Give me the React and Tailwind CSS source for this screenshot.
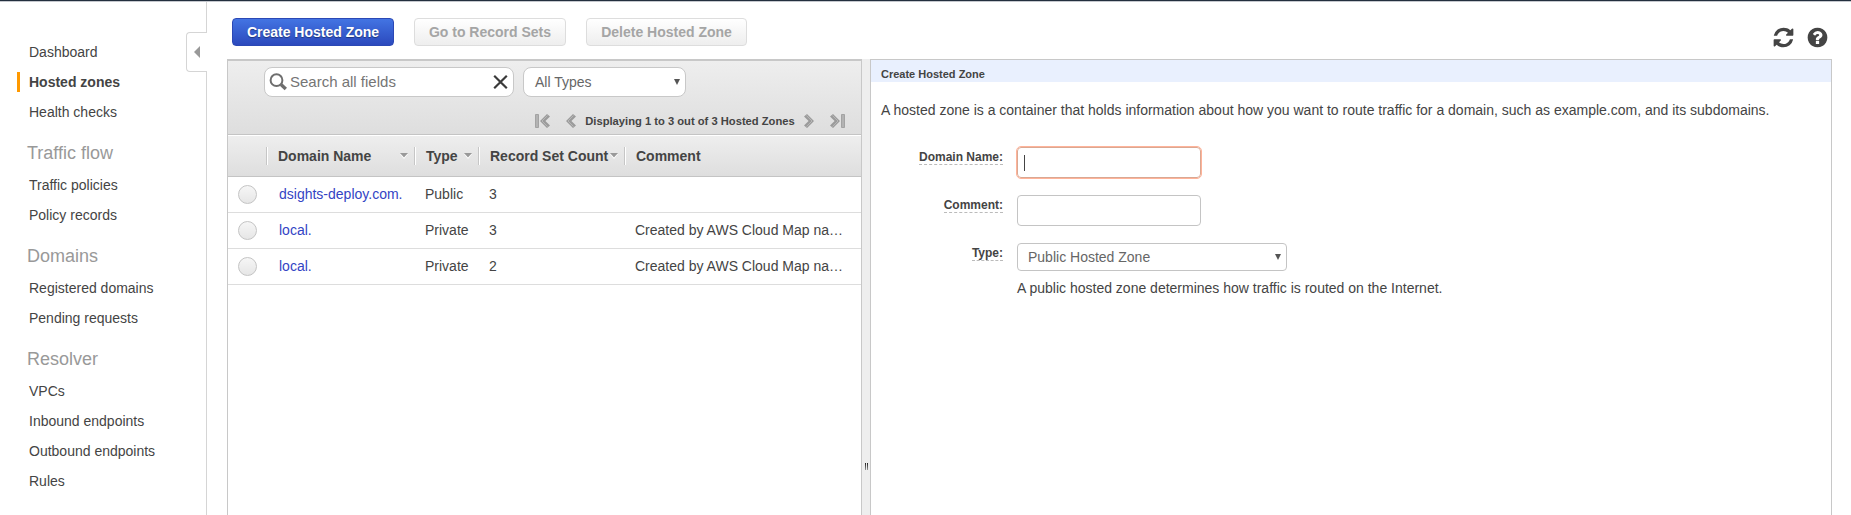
const NAV = [
  { items: ['Dashboard', 'Hosted zones', 'Health checks'] },
  { title: 'Traffic flow', items: ['Traffic policies', 'Policy records'] },
  { title: 'Domains', items: ['Registered domains', 'Pending requests'] },
  { title: 'Resolver', items: ['VPCs', 'Inbound endpoints', 'Outbound endpoints', 'Rules'] },
];

const ZONES = [
  { name: 'dsights-deploy.com.', type: 'Public', count: 3, comment: '' },
  { name: 'local.', type: 'Private', count: 3, comment: 'Created by AWS Cloud Map na…' },
  { name: 'local.', type: 'Private', count: 2, comment: 'Created by AWS Cloud Map na…' },
];

function Sidebar() {
  return (
    <nav className="relative w-[207px] shrink-0 border-r border-[#d5d5d5] pt-[35px]">
      {NAV.map((group, i) => (
        <div key={i}>
          {group.title && (
            <h2 className="h-[43px] pl-[27px] pt-[5px] text-[18px] leading-[43px] text-[#999]">{group.title}</h2>
          )}
          <ul>
            {group.items.map((item) => {
              const active = item === 'Hosted zones';
              return (
                <li key={item} className="flex h-[30px] items-center pl-[17px] text-[14px] leading-[30px]">
                  <span className={active ? 'h-5 w-[3px] bg-[#ff9900]' : 'h-5 w-[3px]'} />
                  <a className={active ? 'pl-[9px] font-bold' : 'pl-[9px]'}>{item}</a>
                </li>
              );
            })}
          </ul>
        </div>
      ))}
      <button className="absolute -right-px top-[30px] flex h-10 w-[21px] items-center rounded-l-[4px] border border-r-0 border-[#d5d5d5] bg-white pl-[7px]">
        <svg width="6" height="12" viewBox="0 0 6 12" fill="#999">
          <path d="M6 0v12L0 6z" />
        </svg>
      </button>
    </nav>
  );
}

function RefreshIcon() {
  return (
    <svg width="23" height="23" viewBox="0 0 1792 1792" fill="#444">
      <path d="M1639 1056q0 5-1 7-64 268-268 434.5t-478 166.5q-146 0-282.5-55t-243.5-157l-129 129q-19 19-45 19t-45-19-19-45v-448q0-26 19-45t45-19h448q26 0 45 19t19 45-19 45l-137 137q71 66 161 102t187 36q134 0 250-65t186-179q11-17 53-117 8-23 30-23h192q13 0 22.5 9.5t9.500 22.500zm25-800v448q0 26-19 45t-45 19h-448q-26 0-45-19t-19-45 19-45l138-138q-148-137-349-137-134 0-250 65t-186 179q-11 17-53 117-8 23-30 23h-199q-13 0-22.500-9.500t-9.500-22.500v-7q65-268 270-434.500t480-166.500q146 0 284 55.500t245 156.500l130-129q19-19 45-19t45 19 19 45z" />
    </svg>
  );
}

function HelpIcon() {
  return (
    <svg width="23" height="23" viewBox="0 0 1792 1792" fill="#444">
      <path d="M1024 1376v-192q0-14-9-23t-23-9h-192q-14 0-23 9t-9 23v192q0 14 9 23t23 9h192q14 0 23-9t9-23zm256-672q0-88-55.5-163t-138.5-116-170-41q-243 0-371 213-15 24 8 42l132 100q7 6 19 6 16 0 25-12 53-68 86-92 34-24 86-24 48 0 85.5 26t37.5 59q0 38-20 61t-68 45q-63 28-115.5 86.5t-52.5 125.5v36q0 14 9 23t23 9h192q14 0 23-9t9-23q0-19 21.5-49.5t54.5-49.5q32-18 49-28.5t46-35 44.5-48 28-60.5 12.5-81zm384 192q0 209-103 385.5t-279.5 279.5-385.5 103-385.5-103-279.5-279.5-103-385.5 103-385.5 279.5-279.5 385.5-103 385.5 103 279.5 279.5 103 385.5z" />
    </svg>
  );
}

function Toolbar() {
  const disabled =
    'h-7 rounded-[4px] border border-[#ddd] bg-linear-to-b from-white to-[#eee] text-center text-[14px] leading-[26px] font-bold text-[#a5a5a5]';
  return (
    <div className="flex h-[57px] items-start pl-[5px] pt-4">
      <button className="h-7 w-[162px] rounded-[4px] border border-[#2b48b5] bg-linear-to-b from-[#4374e3] to-[#2c49bd] text-center text-[14px] leading-[26px] font-bold text-white [text-shadow:0_1px_1px_#0006]">
        Create Hosted Zone
      </button>
      <button className={`${disabled} ml-5 w-[152px]`}>Go to Record Sets</button>
      <button className={`${disabled} ml-5 w-[161px]`}>Delete Hosted Zone</button>
      <div className="ml-auto mr-[22px] flex gap-[11px] pt-[8px]">
        <RefreshIcon />
        <HelpIcon />
      </div>
    </div>
  );
}

function SelectArrow() {
  return (
    <svg width="6" height="6" viewBox="0 0 6 6" fill="#555">
      <path d="M0 0h6L3 6z" />
    </svg>
  );
}

function Chevron({ bar, flip }) {
  const width = bar ? 15 : 10;
  return (
    <svg width={width} height="14" viewBox={`0 0 ${width} 14`} className={flip ? '-scale-x-100' : ''}>
      {bar && <path d="M0.5 0.5h3v13h-3z" fill="#b3b3b3" stroke="#a3a3a3" />}
      <g transform={bar ? 'translate(5 0)' : ''}>
        <path d="M7 0 0 7l7 7 3-2.600L5.400 7 10 2.600z" fill="#9b9b9b" />
        <path d="M7.600 1.500 2 7l5.600 5.500" fill="none" stroke="#b8b8b8" strokeWidth="1" />
      </g>
    </svg>
  );
}

function FilterBar() {
  return (
    <div className="h-[74px] border-b border-[#c4c4c4] bg-linear-to-b from-[#eee] to-[#dedede] pt-[6px]">
      <div className="flex gap-[9px] pl-9">
        <div className="flex h-[30px] w-[250px] items-center rounded-[8px] border border-[#c8c8c8] bg-white pl-[4px] pr-[5px]">
          <svg width="19" height="18" viewBox="0 0 19 18" fill="none" stroke="#6e6e6e">
            <circle cx="7.500" cy="7.200" r="5.900" strokeWidth="2" />
            <path d="M12 11.500 16.800 16" strokeWidth="3.400" />
          </svg>
          <span className="pl-[2px] text-[15px] leading-[28px] text-[#757575]">Search all fields</span>
          <svg className="ml-auto" width="15" height="14" viewBox="0 0 15 14" stroke="#3a3a3a" strokeWidth="2.200">
            <path d="M1.200 0.800 13.800 13.200M13.800 0.800 1.200 13.200" />
          </svg>
        </div>
        <div className="flex h-[30px] w-[163px] items-center justify-between rounded-[8px] border border-[#c8c8c8] bg-white pl-[11px] pr-[5px] text-[14px] leading-[28px] text-[#666]">
          All Types
          <SelectArrow />
        </div>
      </div>
      <div className="mt-[17px] flex h-[14px] pl-[307px]">
        <Chevron bar />
        <span className="w-4" />
        <Chevron />
        <span className="w-[228px] text-center text-[11.200px] leading-[14px] font-bold">
          Displaying 1 to 3 out of 3 Hosted Zones
        </span>
        <Chevron flip />
        <span className="w-4" />
        <Chevron bar flip />
      </div>
    </div>
  );
}

function HeaderCell({ className, label, sort }) {
  return (
    <div className={`flex items-center ${className}`}>
      <span className="h-[18px] w-px bg-[#c6c6c6]" />
      <span className="h-[18px] w-px bg-white" />
      <span className="pl-[10px] whitespace-nowrap">{label}</span>
      {sort && (
        <svg className="ml-auto mr-[6px]" width="8" height="6" viewBox="0 0 8 6">
          <path d="M0 1h8L4 6z" fill="#fff" />
          <path d="M0 0h8L4 4.500z" fill="#999" />
        </svg>
      )}
    </div>
  );
}

function ZoneTable() {
  return (
    <div>
      <div className="flex h-[42px] border-t border-b border-t-white border-b-[#c4c4c4] bg-linear-to-b from-[#eee] to-[#dedede] pl-[38px] text-[14px] font-bold">
        <HeaderCell className="w-[148px]" label="Domain Name" sort />
        <HeaderCell className="w-[64px]" label="Type" sort />
        <HeaderCell className="w-[146px]" label="Record Set Count" sort />
        <HeaderCell className="w-[230px]" label="Comment" />
        <HeaderCell className="w-[2px] overflow-hidden" label="" />
      </div>
      {ZONES.map((z, i) => (
        <div key={i} className="flex h-9 items-center border-b border-[#ddd] pl-[10px] text-[14px] leading-[35px]">
          <span className="h-[19px] w-[19px] rounded-full border border-[#c4c4c4] bg-linear-to-b from-[#f6f6f6] to-[#e6e6e6]" />
          <a className="ml-[22px] w-[146px] text-[#3344c4]">{z.name}</a>
          <span className="w-16">{z.type}</span>
          <span className="w-[146px]">{z.count}</span>
          <span className="whitespace-nowrap">{z.comment}</span>
        </div>
      ))}
    </div>
  );
}

function FieldLabel({ children }) {
  return (
    <div className="flex w-[122px] shrink-0 justify-end">
      <span className="h-[18px] border-b border-dashed border-[#bbb] text-[12px] leading-[20px] font-bold">{children}</span>
    </div>
  );
}

function CreatePanel() {
  return (
    <section className="w-[962px] border border-b-0 border-[#c8c8c8] bg-white">
      <h3 className="h-[22px] bg-[#e9f0fe] pl-[10px] text-[11px] leading-[28px] font-bold">Create Hosted Zone</h3>
      <p className="mt-[16px] pl-[10px] text-[14px] leading-6">
        A hosted zone is a container that holds information about how you want to route traffic for a domain, such as
        example.com, and its subdomains.
      </p>
      <div className="mt-[25px] flex h-12 pl-[10px]">
        <FieldLabel>Domain Name:</FieldLabel>
        <div className="ml-[14px] flex h-[31px] w-[184px] items-center rounded-[4px] border border-[#d9a893] pl-[6px] outline-1 outline-[#ffb399]">
          <span className="h-4 w-px bg-[#444]" />
        </div>
      </div>
      <div className="flex h-12 pl-[10px]">
        <FieldLabel>Comment:</FieldLabel>
        <div className="ml-[14px] h-[31px] w-[184px] rounded-[4px] border border-[#c4c4c4]" />
      </div>
      <div className="flex pl-[10px]">
        <FieldLabel>Type:</FieldLabel>
        <div className="ml-[14px]">
          <div className="flex h-7 w-[270px] items-center justify-between rounded-[4px] border border-[#c4c4c4] pl-[10px] pr-[5px] text-[14px] text-[#666]">
            Public Hosted Zone
            <SelectArrow />
          </div>
          <p className="mt-[7px] text-[14px] leading-5">
            A public hosted zone determines how traffic is routed on the Internet.
          </p>
        </div>
      </div>
    </section>
  );
}

export default function App() {
  return (
    <div className="flex h-screen flex-col overflow-hidden bg-white font-['Liberation_Sans',Arial,sans-serif] text-[#444]">
      <div className="h-[2px] shrink-0 border-b border-[#c5c8ce] bg-[#232f3e]" />
      <div className="flex min-h-0 flex-1">
        <Sidebar />
        <main className="flex min-w-0 flex-1 flex-col pl-5">
          <Toolbar />
          <div className="flex min-h-0 flex-1">
            <section className="w-[635px] border-x border-t-2 border-[#c8c8c8] bg-white">
              <FilterBar />
              <ZoneTable />
            </section>
            <div className="w-2 bg-[#eee] pl-[3px] pt-[404px]">
              <div className="flex h-[7px] gap-px">
                <span className="w-px bg-linear-to-b from-[#222] to-[#999]" />
                <span className="w-px bg-linear-to-b from-[#222] to-[#999]" />
              </div>
            </div>
            <CreatePanel />
          </div>
        </main>
      </div>
    </div>
  );
}
